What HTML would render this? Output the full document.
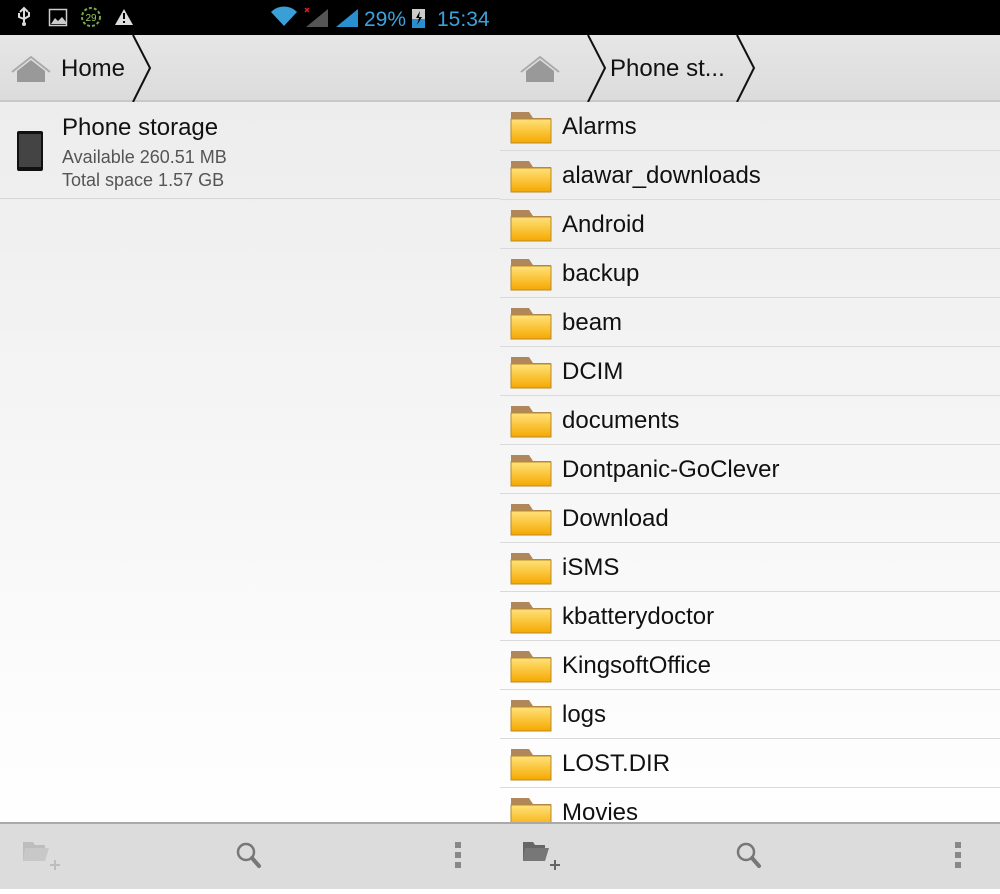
<!DOCTYPE html>
<html><head><meta charset="utf-8"><style>
*{margin:0;padding:0;box-sizing:border-box}
body{width:1000px;height:889px;overflow:hidden;background:#fff;font-family:"Liberation Sans",sans-serif;position:relative}
.sb{position:absolute;left:0;top:0;width:1000px;height:35px;background:#000}
.pane{position:absolute;top:35px;width:500px;height:854px;background:linear-gradient(#ebebeb,#fdfdfd 700px,#fff)}
.hdr{position:absolute;left:0;top:0;width:500px;height:67px;background:linear-gradient(#e6e6e6,#dcdcdc);border-bottom:2px solid #c8c8c8}
.bot{position:absolute;left:0;top:787px;width:500px;height:67px;background:#dcdcdc;border-top:2px solid #a9a9a9}
.t{position:absolute;color:#111;white-space:nowrap}
.row{position:absolute;left:0;width:500px;height:49px;border-bottom:1px solid #dadada}
.row span{position:absolute;left:62px;top:11px;font-size:24px;color:#111}
.fold{position:absolute;left:10px;top:9px}
</style></head><body>
<div class="sb">
<svg width="500" height="35" style="position:absolute;left:0;top:0">
<g fill="#ddd"><path d="M24 8v14M20 12l4-4 4 4M19 13v4l5 2M29 12v4l-5 3" stroke="#ddd" stroke-width="2" fill="none"/><circle cx="24" cy="24" r="2"/></g>
<rect x="49.5" y="9.5" width="17" height="16" fill="none" stroke="#ccc" stroke-width="1.5"/><path d="M51 24l4-6 3 3 4-4 4 5v2z" fill="#ccc"/>
<circle cx="91" cy="17" r="9" fill="none" stroke="#7a4" stroke-width="2" stroke-dasharray="3 2"/><text x="91" y="21" font-size="10" fill="#9c6" text-anchor="middle" font-family="Liberation Sans">29</text>
<path d="M124 9l9 16h-18z" fill="#ddd"/><rect x="123" y="13" width="2" height="6" fill="#000"/><rect x="123" y="21" width="2" height="2" fill="#000"/>
<path d="M271 12a18 18 0 0 1 26 0l-13 14z" fill="#3a9fd6"/>
<path d="M305 8l4 4M309 8l-4 4" stroke="#d22" stroke-width="1.5"/>
<path d="M306 27h22V9z" fill="#555"/>
<path d="M336 27h22V9z" fill="#2a8fd0"/>
<text x="364" y="26" font-size="21" fill="#3aa3dd" font-family="Liberation Sans">29%</text>
<rect x="412" y="9" width="13" height="19" fill="#ccc"/><rect x="412" y="19" width="13" height="9" fill="#2a8fd0"/><path d="M420 11l-4 7h3l-2 7 5-8h-3z" fill="#000"/>
<text x="437" y="26" font-size="21" fill="#3aa3dd" font-family="Liberation Sans">15:34</text>
<rect x="514.5" y="9.5" width="17" height="16" fill="none" stroke="#ddd" stroke-width="1.5"/><path d="M516 24l4-6 3 3 4-4 4 5v2z" fill="#ddd"/>
<text x="547" y="24" font-size="18" fill="#eee" font-family="Liberation Sans">Zapisywanie zrzutu ekranu...</text>
</svg></div>

<div class="pane" style="left:0">
<div class="hdr">
<svg width="500" height="67" style="position:absolute;left:0;top:0"><path d="M12 37l19-15 19 15" stroke="#aaa" stroke-width="2" fill="none"/><path d="M17 36l14-11 14 11v11H17z" fill="#999"/><path d="M133 0l17 33-17 34" stroke="#111" stroke-width="2" fill="none"/></svg>
<div class="t" style="left:61px;top:20px;font-size:24px">Home</div></div>
<div style="position:absolute;left:0;top:67px;width:500px;height:97px;border-bottom:1px solid #d8d8d8">
<svg width="40" height="50" style="position:absolute;left:14px;top:25px"><rect x="3" y="4" width="26" height="40" rx="2" fill="#111"/><rect x="5" y="7" width="22" height="33" fill="#444"/></svg>
<div class="t" style="left:62px;top:12px;font-size:24px">Phone storage</div>
<div class="t" style="left:62px;top:45px;font-size:18px;color:#555">Available 260.51 MB</div>
<div class="t" style="left:62px;top:68px;font-size:18px;color:#555">Total space 1.57 GB</div></div>
<div class="bot"><svg width="500" height="65"><path d="M23 18h10l2 3h10v16H23z" fill="#bdbdbd"/><path d="M25 24h24l-4 13H23z" fill="#c8c8c8"/><path d="M55 36v10M50 41h10" stroke="#bdbdbd" stroke-width="2"/><circle cx="246" cy="28" r="8" fill="none" stroke="#777" stroke-width="2.5"/><path d="M252 34l7 8" stroke="#777" stroke-width="4" stroke-linecap="round"/><rect x="455" y="18" width="6" height="6" fill="#888"/><rect x="455" y="28" width="6" height="6" fill="#888"/><rect x="455" y="38" width="6" height="6" fill="#888"/></svg></div>
</div>

<div class="pane" style="left:500px">
<div class="hdr">
<svg width="500" height="67" style="position:absolute;left:0;top:0"><path d="M21 37l19-15 19 15" stroke="#aaa" stroke-width="2" fill="none"/><path d="M26 36l14-11 14 11v11H26z" fill="#999"/><path d="M88 0l17 33-17 34M237 0l17 33-17 34" stroke="#111" stroke-width="2" fill="none"/></svg>
<div class="t" style="left:110px;top:20px;font-size:24px">Phone st...</div></div>
<div style="position:absolute;left:0;top:67px;width:500px;height:720px;overflow:hidden" id="list">
<div class="row" style="top:0"><svg class="fold" width="42" height="33"><path d="M1 1h18l4 6h18v25H1z" fill="#b0875a"/><path d="M1 8h40v24H1z" fill="url(#g)"/><defs><linearGradient id="g" x1="0" y1="0" x2="0" y2="1"><stop offset="0" stop-color="#ffe27a"/><stop offset="1" stop-color="#f6a800"/></linearGradient></defs><path d="M1 8h40v24H1z" fill="none" stroke="#b88a2a"/></svg><span>Alarms</span></div>
</div>
<div class="bot"><svg width="500" height="65"><path d="M23 18h10l2 3h10v16H23z" fill="#666"/><path d="M25 24h24l-4 13H23z" fill="#777"/><path d="M55 36v10M50 41h10" stroke="#666" stroke-width="2"/><circle cx="246" cy="28" r="8" fill="none" stroke="#777" stroke-width="2.5"/><path d="M252 34l7 8" stroke="#777" stroke-width="4" stroke-linecap="round"/><rect x="455" y="18" width="6" height="6" fill="#888"/><rect x="455" y="28" width="6" height="6" fill="#888"/><rect x="455" y="38" width="6" height="6" fill="#888"/></svg></div>
</div>
<script>
var n=["alawar_downloads","Android","backup","beam","DCIM","documents","Dontpanic-GoClever","Download","iSMS","kbatterydoctor","KingsoftOffice","logs","LOST.DIR","Movies"];
var l=document.getElementById('list');
n.forEach(function(s,i){var d=document.createElement('div');d.className='row';d.style.top=(49*(i+1))+'px';
d.innerHTML='<svg class="fold" width="42" height="33"><path d="M1 1h18l4 6h18v25H1z" fill="#b0875a"/><path d="M1 8h40v24H1z" fill="url(#g)" stroke="#b88a2a"/></svg><span>'+s+'</span>';l.appendChild(d);});
</script>
</body></html>
